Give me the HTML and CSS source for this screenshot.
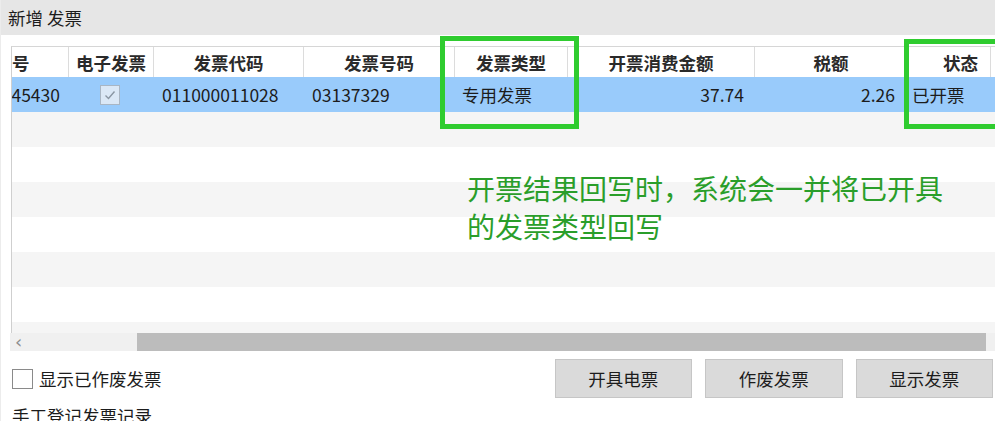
FILE: index.html
```html
<!DOCTYPE html>
<html lang="zh-CN">
<head>
<meta charset="utf-8">
<title>新增 发票</title>
<link rel="stylesheet" href="styles.css">
</head>
<body>
<div class="window">
  <div class="titlebar">新增 发票</div>
  <div class="content">
    <div class="grid">
      <div class="grid-head">
        <div class="hc c1 left">号</div>
        <div class="hc c2">电子发票</div>
        <div class="hc c3">发票代码</div>
        <div class="hc c4">发票号码</div>
        <div class="hc c5">发票类型</div>
        <div class="hc c6">开票消费金额</div>
        <div class="hc c7">税额</div>
        <div class="hc c8 status">状态</div>
        <div class="hc c9"></div>
      </div>
      <div class="grid-body">
        <div class="row selected">
          <div class="dc c1 num">45430</div>
          <div class="dc c2 center"><span class="cb checked"><svg viewBox="0 0 20 20" width="20" height="20"><path d="M5.5 10.5 L8.5 13.5 L14.5 6.5" fill="none" stroke="#8a96a3" stroke-width="1.4"/></svg></span></div>
          <div class="dc c3">011000011028</div>
          <div class="dc c4">03137329</div>
          <div class="dc c5">专用发票</div>
          <div class="dc c6 num">37.74</div>
          <div class="dc c7 num">2.26</div>
          <div class="dc c8">已开票</div>
          <div class="dc c9"></div>
        </div>
        <div class="row alt"></div>
        <div class="row"></div>
        <div class="row alt"></div>
        <div class="row"></div>
        <div class="row alt"></div>
        <div class="row"></div>
        <div class="row alt"></div>
      </div>
      <div class="hscroll">
        <span class="arrow">&lsaquo;</span>
        <div class="thumb"></div>
      </div>
      <div class="note">开票结果回写时，系统会一并将已开具<br>的发票类型回写</div>
      <div class="mark mark-type"></div>
      <div class="mark mark-status"></div>
    </div>
    <div class="actions">
      <label class="check"><span class="box"></span>显示已作废发票</label>
      <div class="buttons">
        <button class="btn">开具电票</button>
        <button class="btn">作废发票</button>
        <button class="btn">显示发票</button>
      </div>
    </div>
    <div class="manual">手工登记发票记录</div>
  </div>
</div>
</body>
</html>
```

FILE: styles.css
```css
* { box-sizing: border-box; }
html, body {
  margin: 0;
  padding: 0;
  background: #ffffff;
  overflow: hidden;
}
body {
  width: 995px;
  height: 421px;
  font-family: "Noto Sans CJK SC", "Noto Sans", sans-serif;
  font-size: 17.5px;
  color: #1c1c1c;
}
.window {
  width: 995px;
  height: 421px;
  overflow: hidden;
  border-left: 1px solid #ececec;
}
.titlebar {
  height: 35px;
  background: #e6e6e6;
  padding-left: 7px;
  display: flex;
  align-items: center;
  line-height: 1;
}
.content {
  padding-top: 11px;
}
.grid {
  position: relative;
  margin-left: 10px;
  width: 984px;
}
.grid-head {
  display: grid;
  grid-template-columns: 57px 85px 150px 151px 113px 187px 153px 83px 1fr;
  height: 31px;
  border-top: 1px solid #d6d6d6;
  border-left: 1px solid #cfcfcf;
  overflow: hidden;
}
.hc {
  display: flex;
  align-items: center;
  justify-content: center;
  font-weight: 700;
  border-right: 1px solid #dcdcdc;
  white-space: nowrap;
  overflow: hidden;
  color: #2a2a2a;
}
.hc.left { justify-content: flex-start; }
.hc.status { justify-content: flex-end; padding-right: 12px; }
.hc.c9 { border-right: none; }
.grid-body {
  height: 256px;
  overflow: hidden;
  border-left: 1px solid #cfcfcf;
}
.row {
  display: grid;
  grid-template-columns: 57px 85px 150px 151px 113px 187px 153px 83px 1fr;
  height: 35px;
  background: #ffffff;
}
.row.alt { background: #f5f5f5; }
.row.selected { background: #99cbfb; }
.dc {
  display: flex;
  align-items: center;
  padding-left: 8px;
  white-space: nowrap;
}
.dc.num { justify-content: flex-end; padding-left: 0; padding-right: 11px; }
.dc.c1.num { padding-right: 9px; }
.dc.c5 { padding-left: 7px; }
.dc.c7.num { padding-right: 13px; }
.dc.c8 { padding-left: 4px; }
.dc.center { justify-content: center; padding-left: 0; padding-right: 3px; }
.cb {
  width: 20px;
  height: 20px;
  border: 1px solid #a9b6c4;
  background: #dbe8f6;
  display: flex;
}
.cb svg { display: block; margin: -1px; }
.hscroll {
  position: relative;
  height: 18px;
  background: #f0f0f0;
  display: flex;
  align-items: center;
  margin-left: -1px;
}
.arrow {
  width: 127px;
  padding-left: 5px;
  color: #8d8d8d;
  font-family: "DejaVu Sans", sans-serif;
  font-size: 18px;
  line-height: 18px;
}
.thumb {
  height: 18px;
  width: 849px;
  background: #bcbcbc;
}
.note {
  position: absolute;
  left: 456px;
  top: 123px;
  font-size: 28px;
  line-height: 38px;
  color: #2a9e2a;
  white-space: nowrap;
  letter-spacing: 0;
}
.mark {
  position: absolute;
  border: 5px solid #2fcc2f;
}
.mark-type {
  left: 429px;
  top: -10px;
  width: 139px;
  height: 93px;
}
.mark-status {
  left: 893px;
  top: -7px;
  width: 140px;
  height: 90px;
}
.actions {
  display: flex;
  align-items: center;
  margin-top: 8px;
  padding-left: 11px;
  padding-right: 2px;
}
.check {
  display: flex;
  align-items: center;
  gap: 6px;
}
.box {
  width: 21px;
  height: 20px;
  border: 1px solid #8a8a8a;
  background: #ffffff;
}
.buttons {
  margin-left: auto;
  display: flex;
  gap: 13px;
}
.btn {
  width: 137.5px;
  height: 39px;
  background: #dadada;
  border: 1px solid #c6c6c6;
  font-family: inherit;
  font-size: 17.5px;
  color: #1c1c1c;
  padding: 0;
}
.manual {
  padding-left: 11px;
  margin-top: 6px;
  line-height: 24px;
}
```
